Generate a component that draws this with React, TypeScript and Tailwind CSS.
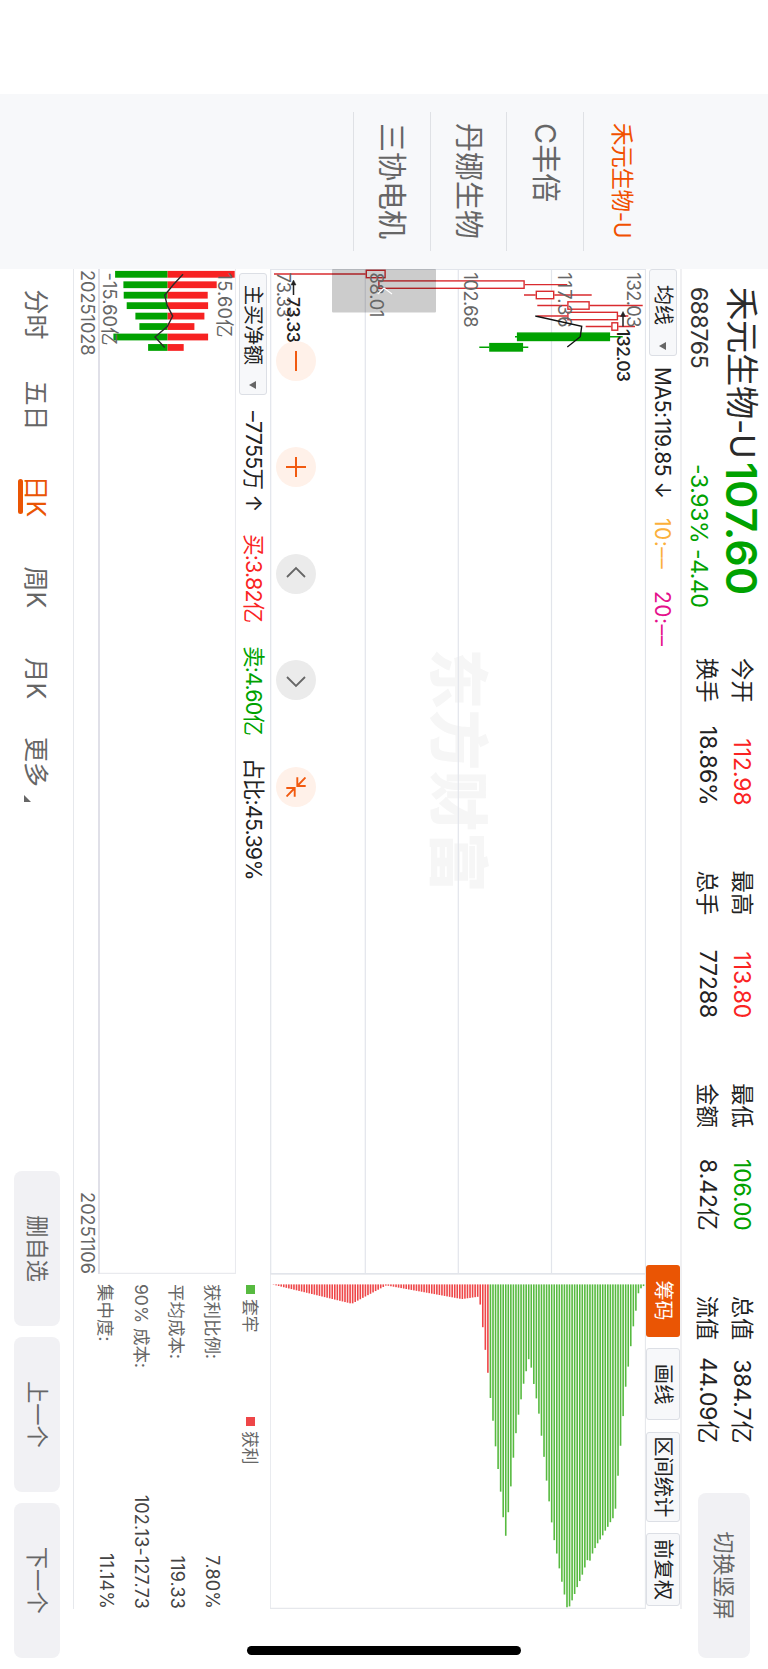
import clsx from "clsx";

const FONT = "font-['Inter','Noto_Sans_CJK_SC',sans-serif]";

const watchlist = ["禾元生物-U", "C丰倍", "丹娜生物", "三协电机"];

const quoteColumns = [
  [
    { label: "今开", value: "112.98", tone: "text-[#fa2323]" },
    { label: "换手", value: "18.86%", tone: "text-[#222]" },
  ],
  [
    { label: "最高", value: "113.80", tone: "text-[#fa2323]" },
    { label: "总手", value: "77288", tone: "text-[#222]" },
  ],
  [
    { label: "最低", value: "106.00", tone: "text-[#00a200]" },
    { label: "金额", value: "8.42亿", tone: "text-[#222]" },
  ],
  [
    { label: "总值", value: "384.7亿", tone: "text-[#222]" },
    { label: "流值", value: "44.09亿", tone: "text-[#222]" },
  ],
];

interface Candle {
  x: number;
  high: number;
  low: number;
  top: number;
  bottom: number;
  up: boolean;
}

const candles: Candle[] = [
  { x: 274, high: 382.3, low: 494, top: 382.3, bottom: 402.3, up: true },
  { x: 284.6, high: 200.7, low: 389.7, top: 243.3, bottom: 389.7, up: true },
  { x: 295, high: 176.3, low: 244, top: 213.7, bottom: 232.3, up: true },
  { x: 305.5, high: 125.3, low: 230.7, top: 178.3, bottom: 200.7, up: true },
  { x: 316, high: 139.7, low: 230.7, top: 150, bottom: 200.7, up: true },
  { x: 326.5, high: 133, low: 182.3, top: 149.7, bottom: 156.7, up: true },
  { x: 336.8, high: 145.3, low: 253, top: 158, bottom: 251, up: false },
  { x: 347.3, high: 239.7, low: 288.7, top: 245, bottom: 278.7, up: false },
];

const gridLines = [216.5, 309.7, 402.7];

const priceLabels = [
  { y: 141, text: "132.03", width: 55 },
  { y: 210.5, text: "117.36", width: 55 },
  { y: 304.5, text: "102.68", width: 55 },
  { y: 398, text: "88.01", width: 45 },
  { y: 491, text: "73.33", width: 45 },
];

const flows = [
  { buy: 67.3, sell: 52.3, net: 585 },
  { buy: 49.3, sell: 44, net: 594.7 },
  { buy: 40.3, sell: 43.7, net: 603.3 },
  { buy: 40.7, sell: 40.7, net: 600.7 },
  { buy: 37, sell: 32, net: 595.3 },
  { buy: 27, sell: 28, net: 600.7 },
  { buy: 40.7, sell: 54, net: 613 },
  { buy: 16.3, sell: 19.3, net: 603.3 },
];

// 筹码分布的轮廓点: [价格轴位置, 长度]，从低价到高价
const chipOutline = [
  [0, 1], [235, 58], [338, 3], [565, 44], [614, 37], [620, 60], [628, 131], [636, 202],
  [644, 274], [651, 344], [659, 415], [666, 486], [674, 557], [682, 628], [689, 699],
  [697, 757], [705, 676], [713, 595], [720, 515], [728, 439], [735, 390], [743, 342],
  [751, 293], [759, 255], [766, 222], [774, 253], [781, 300], [789, 345], [797, 393],
  [804, 456], [812, 522], [819, 588], [827, 653], [835, 719], [842, 767], [850, 809],
  [857, 850], [865, 892], [873, 932], [881, 972], [888, 966], [896, 947], [904, 927],
  [911, 908], [919, 889], [927, 869], [934, 849], [942, 826], [950, 829], [957, 807],
  [965, 790], [972, 777], [980, 765], [988, 752], [995, 739], [1003, 727], [1010, 714],
  [1018, 702], [1026, 672], [1033, 579], [1041, 485], [1049, 392], [1056, 310],
  [1064, 247], [1072, 183], [1079, 128], [1087, 79], [1094, 28], [1102, 12], [1110, 5],
];

function chipLength(pos: number) {
  for (let i = 1; i < chipOutline.length; i++) {
    const [x0, y0] = chipOutline[i - 1];
    const [x1, y1] = chipOutline[i];
    if (pos <= x1) return y0 + ((y1 - y0) * (pos - x0)) / (x1 - x0);
  }
  return 5;
}

const chips = Array.from({ length: 146 }, (_, i) => {
  const pos = i * 7.655;
  return { y: 494.4 - pos / 3, length: chipLength(pos) / 3, profit: pos < 648 };
});

const chipStats = [
  { label: "获利比例:", value: "7.80%" },
  { label: "平均成本:", value: "119.33" },
  { label: "90% 成本:", value: "102.13-127.73" },
  { label: "集中度:", value: "11.14%" },
];

const periods = ["分时", "五日", "日K", "周K", "月K"];

function Sidebar() {
  return (
    <aside className="flex w-[175px] flex-col bg-[#f7f8fa] px-[18px] pt-[108px]">
      {watchlist.map((name, i) => (
        <div
          key={name}
          className={clsx(
            "flex h-[76.8px] items-center whitespace-nowrap border-b border-[#dfe1e5] pl-[11px]",
            i === 0 ? "text-[22.5px] tracking-[-0.3px] text-[#f15000]" : "text-[29px] text-[#666]",
          )}
        >
          {name}
        </div>
      ))}
    </aside>
  );
}

function QuoteHeader() {
  return (
    <header className="flex h-[86px] pl-[18px]">
      <div className="w-[371px] whitespace-nowrap pt-[2px]">
        <div className="flex h-[49px] items-center">
          <span className="w-[175px] text-[33.3px] tracking-[-0.3px] text-[#2b2b2b]">禾元生物-U</span>
          <span className="text-[43px] font-semibold tracking-[-0.1px] text-[#00a200]">107.60</span>
        </div>
        <div className="flex h-[37px] items-center text-[23px] tracking-[-0.4px]">
          <span className="w-[177px] text-[#333]">688765</span>
          <span className="w-[85px] text-[#00a200]">-3.93%</span>
          <span className="text-[#00a200]">-4.40</span>
        </div>
      </div>
      <div className="flex gap-[65px]">
        {quoteColumns.map((rows) => (
          <dl key={rows[0].label} className="w-[147.6px] pt-[9px]">
            {rows.map((row) => (
              <div key={row.label} className="flex h-[34.5px] items-center justify-between whitespace-nowrap">
                <dt className="text-[22.3px] text-[#222]">{row.label}</dt>
                <dd className={clsx("text-[23px] tracking-[-0.1px]", row.tone)}>{row.value}</dd>
              </div>
            ))}
          </dl>
        ))}
      </div>
      <button className="ml-auto mr-[11px] mt-[18px] h-[52px] w-[165px] rounded-lg bg-[#f1f1f4] text-[22px] text-[#666]">
        切换竖屏
      </button>
    </header>
  );
}

function IndicatorSelect({ label, className }: { label: string; className: string }) {
  return (
    <button
      className={clsx(
        "flex h-[28px] shrink-0 items-center justify-between rounded-[3px] border border-[#dcdfe5] bg-[#f7f8fa] text-[20px] text-[#222]",
        className,
      )}
    >
      {label}
      <svg viewBox="0 0 8 7" className="h-[7px] w-[8px]">
        <path d="M0 0H8L4 7Z" fill="#666" />
      </svg>
    </button>
  );
}

function AverageRow() {
  const tool = "h-[34px] rounded-[3px] border border-[#dcdfe5] bg-[#f7f8fa] text-[20.3px] text-[#222]";
  return (
    <div className="flex h-[36px] w-[1340px] items-center whitespace-nowrap border-t-2 border-[#f0f0f2] text-[21px] tracking-[-0.6px]">
      <IndicatorSelect label="均线" className="w-[87px] pl-[15px] pr-[5px] tracking-normal" />
      <span className="ml-[11px] w-[151px] text-[#222]">
        <span className="tracking-[-0.4px]">MA5:119.85</span> ↓
      </span>
      <span className="w-[73px] tracking-[0.5px] text-[#fbb03b]">10:––</span>
      <span className="tracking-[0.5px] text-[#e5108c]">20:––</span>
      <div className="ml-auto mr-[3px] flex gap-[11.3px] tracking-normal">
        <button className="h-[34px] w-[72px] rounded-[3px] bg-[#ea5504] text-[20px] text-white">筹码</button>
        <button className={clsx(tool, "w-[72.5px]")}>画线</button>
        <button className={clsx(tool, "w-[90px]")}>区间统计</button>
        <button className={clsx(tool, "w-[73px]")}>前复权</button>
      </div>
    </div>
  );
}

function ChartControls() {
  const round = "flex size-10 items-center justify-center rounded-full";
  return (
    <div className="absolute left-[72px] top-[330px] flex gap-[66.4px]">
      <button className={clsx(round, "bg-[#fff1e9]")}>
        <svg viewBox="0 0 20 20" className="size-5" stroke="#f15a10" strokeWidth="2">
          <path d="M0 10H20" />
        </svg>
      </button>
      <button className={clsx(round, "bg-[#fff1e9]")}>
        <svg viewBox="0 0 20 20" className="size-5" stroke="#f15a10" strokeWidth="2">
          <path d="M0 10H20M10 0V20" />
        </svg>
      </button>
      <button className={clsx(round, "bg-[#ebebeb]")}>
        <svg viewBox="0 0 20 20" className="size-5" stroke="#666" strokeWidth="1.8" fill="none">
          <path d="M13 1L4 10L13 19" />
        </svg>
      </button>
      <button className={clsx(round, "bg-[#ebebeb]")}>
        <svg viewBox="0 0 20 20" className="size-5" stroke="#666" strokeWidth="1.8" fill="none">
          <path d="M7 1L16 10L7 19" />
        </svg>
      </button>
      <button className={clsx(round, "bg-[#fff1e9]")}>
        <svg viewBox="0 0 20 20" className="size-5" stroke="#f15a10" strokeWidth="1.9" fill="none">
          <path d="M0.3 8.7H9V0.3M9 8.7L0.5 0.5M19.7 11.3H11V19.7M11 11.3L19.5 19.5" />
        </svg>
      </button>
    </div>
  );
}

function CandleChart() {
  return (
    <div className="relative h-[376px]">
      <svg viewBox="269 122 1005 376" className="block h-[376px] w-[1005px]">
        <text x="648.5" y="332.5" fontSize="60.5" fontWeight="900" fill="#f6f6f6" textLength="244">
          东方财富
        </text>
        <g stroke="#e2e5eb" strokeWidth="1.2">
          {gridLines.map((y) => (
            <path key={y} d={`M269 ${y}H1274`} />
          ))}
          <path d="M269 122.5H1274M269 497.3H1274M269.4 122V498M1273.5 122V498" />
        </g>
        {candles.map((c) => {
          const color = c.up ? "#d92b2f" : "#00a200";
          return (
            <g key={c.x} stroke={color} strokeWidth="1.4">
              <path d={`M${c.x} ${c.high}V${c.top}M${c.x} ${c.bottom}V${c.low}`} />
              <rect
                x={c.x - 3.7}
                y={c.top + 0.6}
                width="7.4"
                height={c.bottom - c.top - 1.2}
                fill={c.up ? "#fff" : color}
              />
            </g>
          );
        })}
        <rect x="269" y="332" width="43.5" height="104" rx="1" fill="#000" fillOpacity="0.2" />
        <g fontSize="18.3" fill="#666">
          {priceLabels.map((l) => (
            <text key={l.text} x="272.5" y={l.y} textLength={l.width}>
              {l.text}
            </text>
          ))}
        </g>
        <path d="M294 376L288 384L294 390.3" fill="none" stroke="#fff" strokeWidth="1.2" />
        <path
          d="M316 232.7L326.3 186.3L336.7 187.7L347 200.7"
          fill="none"
          stroke="#111"
          strokeWidth="1.4"
        />
        <g fontSize="17.8" fontWeight="500" fill="#222">
          <text x="329" y="151.5" textLength="53">132.03</text>
          <text x="297" y="481" textLength="46">73.33</text>
        </g>
        <g stroke="#222" strokeWidth="1.5" fill="#222">
          <path d="M315 145H326.5" />
          <path d="M311.5 145L316.5 142.5V147.5Z" strokeWidth="0.5" />
          <path d="M284 474.5H295" />
          <path d="M280 474.5L285 472V477Z" strokeWidth="0.5" />
        </g>
      </svg>
      <ChartControls />
    </div>
  );
}

function FlowRow() {
  return (
    <div className="flex h-[34px] items-center whitespace-nowrap text-[21.5px] tracking-[-0.8px]">
      <IndicatorSelect label="主买净额" className="ml-[4px] w-[122px] pl-[11px] pr-[5px] tracking-normal" />
      <span className="ml-[16px] w-[123px] text-[#222]">–7755万 ↑</span>
      <span className="w-[112px] text-[#fa2323]">买:3.82亿</span>
      <span className="w-[112px] text-[#00a200]">卖:4.60亿</span>
      <span className="text-[#222]">占比:45.39%</span>
    </div>
  );
}

function FlowChart() {
  const xs = flows.map((_, i) => 274.3 + i * 10.45);
  return (
    <svg viewBox="269 532 1005 138" className="block h-[138px] w-[1005px]">
      <path d="M269 532.3H1273.5V670" fill="none" stroke="#e9eaee" strokeWidth="1.5" />
      <path d="M269 669H1274" stroke="#e0e0e8" strokeWidth="2" />
      {flows.map((f, i) => (
        <g key={i}>
          <rect x={xs[i] - 3.4} y={600.6 - f.buy} width="6.8" height={f.buy} fill="#f72222" />
          <rect x={xs[i] - 3.4} y="600.6" width="6.8" height={f.sell} fill="#00a200" />
        </g>
      ))}
      <g fontSize="18.3" fill="#666">
        <text x="272.5" y="550" textLength="65">15.60亿</text>
        <text x="272.5" y="665" textLength="73">-15.60亿</text>
      </g>
      <polyline
        points={flows.map((f, i) => `${xs[i]},${f.net}`).join(" ")}
        fill="none"
        stroke="#2b2b2b"
        strokeWidth="1.4"
      />
    </svg>
  );
}

function ChipPanel() {
  return (
    <section className="w-[335px]">
      <svg viewBox="1274 122 335 376" className="block h-[376px] w-[335px]">
        <path d="M1274 122.5H1608.4V497.8H1274Z" fill="none" stroke="#e6e8ec" strokeWidth="1.3" />
        {chips.map((c) => (
          <rect
            key={c.y}
            x="1284.4"
            y={c.y - 0.75}
            width={c.length}
            height="1.6"
            fill={c.profit ? "#ee4648" : "#57ba40"}
          />
        ))}
      </svg>
      <div className="flex h-[40px] items-center pl-[11px] text-[16.8px] text-[#666]">
        <span className="flex w-[132px] items-center gap-[5px]">
          <i className="size-[9px] bg-[#57ba40]" />
          套牢
        </span>
        <span className="flex items-center gap-[5px]">
          <i className="size-[9px] bg-[#ee4648]" />
          获利
        </span>
      </div>
      <dl className="pl-[10px]">
        {chipStats.map((row) => (
          <div key={row.label} className="flex h-[35.5px] items-center justify-between text-[17.5px]">
            <dt className="text-[#666]">{row.label}</dt>
            <dd className="text-[18px] tracking-[0.15px] text-[#444]">{row.value}</dd>
          </div>
        ))}
      </dl>
    </section>
  );
}

function BottomBar() {
  const action = "h-[46px] w-[155.5px] rounded-lg bg-[#f1f1f4] text-[22.3px] text-[#666]";
  return (
    <footer className="flex h-[73px]">
      <nav className="flex h-full text-[25px] text-[#666]">
        {periods.map((p) => (
          <div
            key={p}
            className={clsx(
              "flex w-[91px] flex-col items-center pt-[18px] leading-[38px]",
              p === "日K" && "text-[#ea5504]",
            )}
          >
            {p}
            {p === "日K" && <span className="-mt-[6px] h-[5px] w-[35px] rounded-full bg-[#ea5504]" />}
          </div>
        ))}
        <div className="flex w-[91px] justify-center gap-[8px] pt-[18px] leading-[38px]">
          更多
          <svg viewBox="0 0 7 7" className="mt-[24px] size-[7px]">
            <path d="M7 0V7H0Z" fill="#666" />
          </svg>
        </div>
      </nav>
      <div className="ml-auto mr-[11px] flex gap-[10.3px] pt-[13px]">
        <button className={action}>删自选</button>
        <button className={action}>上一个</button>
        <button className={action}>下一个</button>
      </div>
    </footer>
  );
}

export default function App() {
  return (
    <div className="h-[1669px] w-[768px] overflow-hidden bg-white">
      {/* 横屏页面，整体顺时针旋转 90° */}
      <div
        className={clsx(
          "flex h-[768px] w-[1669px] origin-top-left translate-x-[768px] rotate-90 bg-white pl-[94px] leading-none",
          FONT,
        )}
      >
        <Sidebar />
        <main className="flex w-[1400px] flex-col">
          <QuoteHeader />
          <AverageRow />
          <div className="flex">
            <div className="w-[1340px] border-b border-[#e6e8ec]">
              <div className="flex">
                <section className="w-[1005px]">
                  <CandleChart />
                  <FlowRow />
                  <FlowChart />
                  <div className="flex h-[24px] items-center justify-between pb-[3px] pl-[1px] text-[18.3px] tracking-[-0.1px] text-[#666]">
                    <span>20251028</span>
                    <span>20251106</span>
                  </div>
                </section>
                <ChipPanel />
              </div>
            </div>
            <div className="flex flex-1 items-start justify-end pr-[14px] pt-[125px]">
              <div className="h-[274px] w-[9px] rounded-full bg-black" />
            </div>
          </div>
          <BottomBar />
        </main>
      </div>
    </div>
  );
}
